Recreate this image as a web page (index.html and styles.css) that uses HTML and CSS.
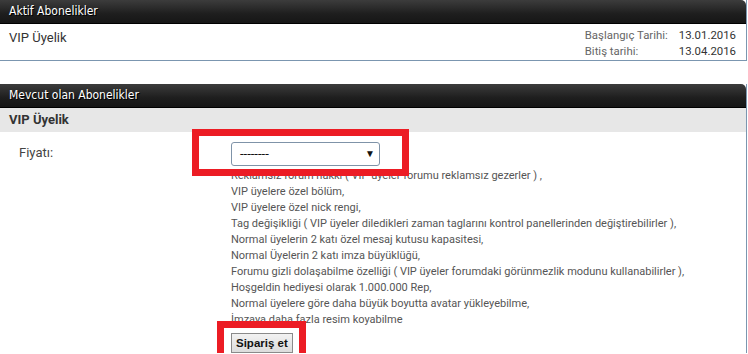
FILE: index.html
```html
<!DOCTYPE html>
<html lang="tr">
<head>
  <meta charset="UTF-8">
  <title>Abonelikler</title>
  <link rel="stylesheet" href="styles.css">
</head>
<body>

  <!-- Aktif abonelikler -->
  <div class="blok">
    <div class="baslik">Aktif Abonelikler</div>
    <div class="aktif">
      <div class="aktif-ad">VIP Üyelik</div>
      <div class="tarihler">
        <span class="etiket">Başlangıç Tarihi:</span>
        <span class="deger">13.01.2016</span>
        <span class="etiket">Bitiş tarihi:</span>
        <span class="deger">13.04.2016</span>
      </div>
    </div>
  </div>

  <!-- Mevcut abonelikler -->
  <div class="blok blok-uzun">
    <div class="baslik">Mevcut olan Abonelikler</div>
    <div class="alt-baslik">VIP Üyelik</div>
    <div class="form">
      <div class="form-etiket">Fiyatı:</div>
      <div class="form-icerik">
        <div class="secim-kutu">
          <div class="secim">--------</div>
          <span class="ok">▼</span>
          <span class="isaret isaret-secim"></span>
        </div>
        <div class="ozellikler">
          <div>Reklamsız forum hakkı ( VIP üyeler forumu reklamsız gezerler ) ,</div>
          <div>VIP üyelere özel bölüm,</div>
          <div>VIP üyelere özel nick rengi,</div>
          <div>Tag değişikliği ( VIP üyeler diledikleri zaman taglarını kontrol panellerinden değiştirebilirler ),</div>
          <div>Normal üyelerin 2 katı özel mesaj kutusu kapasitesi,</div>
          <div>Normal Üyelerin 2 katı imza büyüklüğü,</div>
          <div>Forumu gizli dolaşabilme özelliği ( VIP üyeler forumdaki görünmezlik modunu kullanabilirler ),</div>
          <div>Hoşgeldin hediyesi olarak 1.000.000 Rep,</div>
          <div>Normal üyelere göre daha büyük boyutta avatar yükleyebilme,</div>
          <div>İmzaya daha fazla resim koyabilme</div>
        </div>
        <div class="buton-kutu">
          <button class="siparis">Sipariş et</button>
          <span class="isaret isaret-buton"></span>
        </div>
      </div>
    </div>
  </div>

</body>
</html>
```

FILE: styles.css
```css
body {
  margin: 0;
  height: 354px;
  font-family: Roboto, "Liberation Sans", Arial, sans-serif;
  background: #fff;
  color: #333;
  overflow: hidden;
}
.blok {
  width: 746px;
  border-right: 1px solid #7b96b0;
  border-bottom: 1px solid #7b96b0;
  margin-bottom: 23px;
}
.blok-uzun {
  border-bottom: none;
  margin-bottom: 0;
  height: 269px;
  overflow: hidden;
}
.baslik {
  height: 24px;
  line-height: 23px;
  padding-left: 9px;
  background: linear-gradient(#3c3c3c, #1e1e1e 60%, #161616);
  border-bottom: 1px solid #000;
  border-radius: 0 5px 0 0;
  color: #fff;
  font-family: "DejaVu Sans Condensed", Tahoma, sans-serif;
  font-size: 12px;
  text-shadow: 1px 1px 0 #000;
  box-sizing: border-box;
}
.aktif {
  display: flex;
  justify-content: space-between;
  height: 32px;
  padding: 4px 10px 0 9px;
}
.aktif-ad {
  font-size: 13px;
  line-height: 18px;
  padding-top: 1px;
}
.tarihler {
  display: grid;
  grid-template-columns: 94px auto;
  font-size: 11.4px;
  line-height: 15px;
}
.etiket {
  color: #666;
}
.deger {
  color: #333;
}
.alt-baslik {
  height: 24px;
  line-height: 24px;
  padding-left: 9px;
  background: #e7e7e7;
  font-weight: bold;
  font-size: 13px;
  color: #333;
}
.form {
  display: flex;
  padding-top: 10px;
}
.form-etiket {
  width: 212px;
  padding-left: 19px;
  padding-top: 3px;
  font-size: 13px;
  color: #444;
}
.form-icerik {
  font-size: 11px;
  color: #555;
}
.secim-kutu {
  position: relative;
  width: 149px;
}
.secim {
  height: 22px;
  line-height: 22px;
  border: 1px solid #7f93a8;
  border-radius: 3px;
  padding-left: 8px;
  color: #111;
  font-size: 13px;
}
.ok {
  position: absolute;
  right: 5px;
  top: 6px;
  font-size: 10px;
  color: #111;
}
.ozellikler {
  margin-top: 2px;
  line-height: 16px;
}
.buton-kutu {
  position: relative;
  margin-top: 5px;
}
.siparis {
  height: 20px;
  padding: 0 4px;
  border: 1px solid #8a8a8a;
  background: linear-gradient(#f2f2f2, #dcdcdc);
  font-family: "Liberation Sans", Arial, sans-serif;
  font-weight: bold;
  font-size: 11.5px;
  color: #111;
  white-space: nowrap;
}
.isaret {
  position: absolute;
  border: 7px solid #ec1c24;
}
.isaret-secim {
  left: -39px;
  top: -13px;
  width: 203px;
  height: 33px;
}
.isaret-buton {
  left: -14px;
  top: -12px;
  width: 75px;
  height: 40px;
}
```
